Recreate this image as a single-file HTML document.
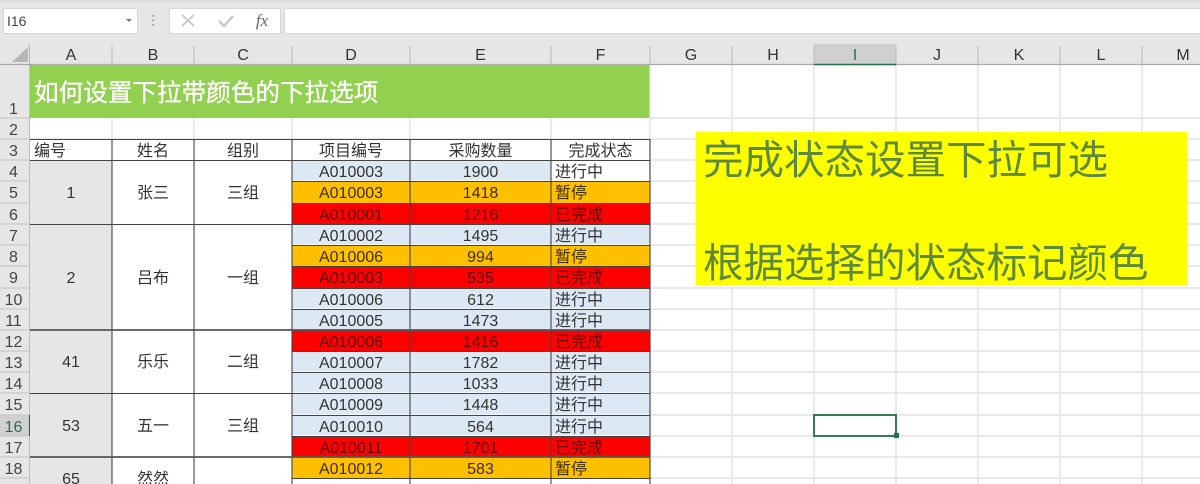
<!DOCTYPE html>
<html lang="zh">
<head>
<meta charset="utf-8">
<style>
html,body{margin:0;padding:0;width:1200px;height:484px;overflow:hidden;background:#fff}
body{position:relative;font-family:"Liberation Sans","Noto Sans CJK SC",sans-serif;font-size:16px;color:#333}
div{position:absolute;box-sizing:border-box}
.c{text-align:center;white-space:nowrap}
.ch{top:44px;height:20px;line-height:24px;color:#333}
.rh{left:0;width:27px;text-align:center;color:#444}
.d{left:292px;width:118px}
.e{left:410px;width:141px}
.f{left:551px;width:99px;padding-left:4px;text-align:left}
.d,.e,.f{white-space:nowrap;color:#333}
.d,.e{text-align:center}
.o{background:#ffc000;color:#3d2e00}
.x{background:#ff0000;color:#5a0000}
.b{background:#dce9f5;box-shadow:inset 0 -1px 0 #f2f7fb}
.m{text-align:center;white-space:nowrap;color:#333}
svg{position:absolute;left:0;top:0}
</style>
</head>
<body>
<!-- top chrome -->
<div style="left:0;top:0;width:1200px;height:65px;background:#e6e6e6"></div>
<div style="left:0;top:0;width:1200px;height:3px;background:#dedede"></div>
<div style="left:3px;top:8px;width:135px;height:26px;background:#fff;border:1px solid #d8d8d8"></div>
<div style="left:7px;top:10px;font-size:14px;line-height:22px;color:#444">I16</div>
<div style="left:126px;top:19px;width:0;height:0;border-left:3px solid transparent;border-right:3px solid transparent;border-top:3px solid #777"></div>
<div style="left:169px;top:8px;width:112px;height:26px;background:#fff;border:1px solid #d8d8d8"></div>
<div style="left:284px;top:8px;width:916px;height:26px;background:#fff;border:1px solid #d8d8d8;border-right:0"></div>
<div style="left:252px;top:9px;width:20px;height:24px;line-height:24px;text-align:center;font-family:'Liberation Serif',serif;font-style:italic;font-size:17px;color:#666">fx</div>

<!-- column headers -->
<div style="left:814px;top:44px;width:82px;height:20px;background:#d0d0d0"></div>
<div class="c ch" style="left:30px;width:82px">A</div>
<div class="c ch" style="left:112px;width:82px">B</div>
<div class="c ch" style="left:194px;width:98px">C</div>
<div class="c ch" style="left:292px;width:118px">D</div>
<div class="c ch" style="left:410px;width:141px">E</div>
<div class="c ch" style="left:551px;width:99px">F</div>
<div class="c ch" style="left:650px;width:82px">G</div>
<div class="c ch" style="left:732px;width:82px">H</div>
<div class="c ch" style="left:814px;width:82px;color:#2d6b55">I</div>
<div class="c ch" style="left:896px;width:82px">J</div>
<div class="c ch" style="left:978px;width:82px">K</div>
<div class="c ch" style="left:1060px;width:82px">L</div>
<div class="c ch" style="left:1142px;width:82px">M</div>

<!-- row header -->
<div style="left:0;top:65px;width:30px;height:419px;background:#e6e6e6"></div>
<div style="left:0;top:415px;width:29px;height:21px;background:#d0d0d0"></div>
<div class="rh" style="top:98px;height:20px;line-height:24px">1</div>
<div class="rh" style="top:118px;height:21px;line-height:25px">2</div>
<div class="rh" style="top:139px;height:21px;line-height:25px">3</div>
<div class="rh" style="top:160px;height:21px;line-height:25px">4</div>
<div class="rh" style="top:181px;height:22px;line-height:25px">5</div>
<div class="rh" style="top:203px;height:21px;line-height:25px">6</div>
<div class="rh" style="top:224px;height:21px;line-height:25px">7</div>
<div class="rh" style="top:245px;height:21px;line-height:25px">8</div>
<div class="rh" style="top:266px;height:22px;line-height:25px">9</div>
<div class="rh" style="top:288px;height:21px;line-height:25px">10</div>
<div class="rh" style="top:309px;height:21px;line-height:25px">11</div>
<div class="rh" style="top:330px;height:21px;line-height:25px">12</div>
<div class="rh" style="top:351px;height:21px;line-height:25px">13</div>
<div class="rh" style="top:372px;height:21px;line-height:25px">14</div>
<div class="rh" style="top:393px;height:22px;line-height:25px">15</div>
<div class="rh" style="top:415px;height:21px;line-height:25px;color:#2d6b55">16</div>
<div class="rh" style="top:436px;height:21px;line-height:25px">17</div>
<div class="rh" style="top:457px;height:21px;line-height:25px">18</div>

<!-- title -->
<div style="left:30px;top:65px;width:620px;height:53px;background:#92d050"></div>
<div style="left:34px;top:77px;font-size:24.6px;line-height:34px;color:#fff;white-space:nowrap;-webkit-text-stroke:.3px #fff">如何设置下拉带颜色的下拉选项</div>

<!-- gridlines drawn below fills -->
<svg width="1200" height="484" style="z-index:0">
<g stroke="#e2e2e2" stroke-width="1.4" fill="none">
<path d="M650 118H1200M30 139H1200M650 160H1200M650 181H1200M650 203H1200M650 224H1200M650 245H1200M650 266H1200M650 288H1200M650 309H1200M650 330H1200M650 351H1200M650 372H1200M650 393H1200M650 415H1200M650 436H1200M650 457H1200M650 478H1200"/>
<path d="M112 118V139M194 118V139M292 118V139M410 118V139M551 118V139M650 65V484M732 65V484M814 65V484M896 65V484M978 65V484M1060 65V484M1142 65V484"/>
</g>
<!-- row header separators -->
<path d="M0 118H30M0 139H30M0 160H30M0 181H30M0 203H30M0 224H30M0 245H30M0 266H30M0 288H30M0 309H30M0 330H30M0 351H30M0 372H30M0 393H30M0 415H30M0 436H30M0 457H30M0 478H30" stroke="#c9c9c9" stroke-width="1.2"/>
<path d="M29.5 65V484" stroke="#bdbdbd"/>
<path d="M112 46V64M194 46V64M292 46V64M410 46V64M551 46V64M650 46V64M732 46V64M814 46V64M896 46V64M978 46V64M1060 46V64M1142 46V64M29.5 44V64" stroke="#b8b8b8"/>
<path d="M0 64.5H1200" stroke="#a9a9a9" stroke-width="1.2"/>
<path d="M814 64.5H896" stroke="#217346" stroke-width="1.6"/>
<path d="M29.5 415V436" stroke="#217346" stroke-width="1.2"/>
<path d="M12 62L28 47V62Z" fill="#b6b6b6"/>
<!-- formula icons -->
<path d="M182 15L194 26M194 15L182 26" stroke="#c2c2c2" stroke-width="1.6" fill="none"/>
<path d="M219 21L224 26L233 16" stroke="#c8c8c8" stroke-width="2.4" fill="none"/>
<path d="M153 15v1.6M153 19.5v1.6M153 24v1.6" stroke="#a8a8a8" stroke-width="2.4" fill="none"/>
</svg>

<!-- merged A fill -->
<div style="left:30px;top:160px;width:82px;height:64px;background:#e6e6e6"></div>
<div style="left:30px;top:224px;width:82px;height:106px;background:#e6e6e6"></div>
<div style="left:30px;top:330px;width:82px;height:63px;background:#e6e6e6"></div>
<div style="left:30px;top:393px;width:82px;height:64px;background:#e6e6e6"></div>
<div style="left:30px;top:457px;width:82px;height:27px;background:#e6e6e6"></div>

<!-- header row 3 -->
<div style="left:34px;top:139px;height:21px;line-height:25px;white-space:nowrap">编号</div>
<div class="m" style="left:112px;top:139px;width:82px;height:21px;line-height:25px">姓名</div>
<div class="m" style="left:194px;top:139px;width:98px;height:21px;line-height:25px">组别</div>
<div class="m" style="left:292px;top:139px;width:118px;height:21px;line-height:25px">项目编号</div>
<div class="m" style="left:410px;top:139px;width:141px;height:21px;line-height:25px">采购数量</div>
<div class="m" style="left:551px;top:139px;width:99px;height:21px;line-height:25px">完成状态</div>

<!-- merged -->
<div class="m" style="left:30px;top:160px;width:82px;height:64px;line-height:68px">1</div>
<div class="m" style="left:112px;top:160px;width:82px;height:64px;line-height:68px">张三</div>
<div class="m" style="left:194px;top:160px;width:98px;height:64px;line-height:68px">三组</div>
<div class="m" style="left:30px;top:224px;width:82px;height:106px;line-height:110px">2</div>
<div class="m" style="left:112px;top:224px;width:82px;height:106px;line-height:110px">吕布</div>
<div class="m" style="left:194px;top:224px;width:98px;height:106px;line-height:110px">一组</div>
<div class="m" style="left:30px;top:330px;width:82px;height:63px;line-height:66px">41</div>
<div class="m" style="left:112px;top:330px;width:82px;height:63px;line-height:66px">乐乐</div>
<div class="m" style="left:194px;top:330px;width:98px;height:63px;line-height:66px">二组</div>
<div class="m" style="left:30px;top:393px;width:82px;height:64px;line-height:67px">53</div>
<div class="m" style="left:112px;top:393px;width:82px;height:64px;line-height:67px">五一</div>
<div class="m" style="left:194px;top:393px;width:98px;height:64px;line-height:67px">三组</div>
<div class="m" style="left:30px;top:468px;width:82px;height:24px;line-height:24px">65</div>
<div class="m" style="left:112px;top:468px;width:82px;height:24px;line-height:24px">然然</div>

<!-- data rows -->
<div class="d b" style="top:160px;height:21px;line-height:25px">A010003</div><div class="e b" style="top:160px;height:21px;line-height:25px">1900</div><div class="f" style="top:160px;height:21px;line-height:25px">进行中</div>
<div class="d o" style="top:181px;height:22px;line-height:25px">A010003</div><div class="e o" style="top:181px;height:22px;line-height:25px">1418</div><div class="f o" style="top:181px;height:22px;line-height:25px">暂停</div>
<div class="d x" style="top:203px;height:21px;line-height:25px">A010001</div><div class="e x" style="top:203px;height:21px;line-height:25px">1216</div><div class="f x" style="top:203px;height:21px;line-height:25px">已完成</div>
<div class="d b" style="top:224px;height:21px;line-height:25px">A010002</div><div class="e b" style="top:224px;height:21px;line-height:25px">1495</div><div class="f b" style="top:224px;height:21px;line-height:25px">进行中</div>
<div class="d o" style="top:245px;height:21px;line-height:25px">A010006</div><div class="e o" style="top:245px;height:21px;line-height:25px">994</div><div class="f o" style="top:245px;height:21px;line-height:25px">暂停</div>
<div class="d x" style="top:266px;height:22px;line-height:25px">A010003</div><div class="e x" style="top:266px;height:22px;line-height:25px">535</div><div class="f x" style="top:266px;height:22px;line-height:25px">已完成</div>
<div class="d b" style="top:288px;height:21px;line-height:25px">A010006</div><div class="e b" style="top:288px;height:21px;line-height:25px">612</div><div class="f b" style="top:288px;height:21px;line-height:25px">进行中</div>
<div class="d b" style="top:309px;height:21px;line-height:25px">A010005</div><div class="e b" style="top:309px;height:21px;line-height:25px">1473</div><div class="f b" style="top:309px;height:21px;line-height:25px">进行中</div>
<div class="d x" style="top:330px;height:21px;line-height:25px">A010006</div><div class="e x" style="top:330px;height:21px;line-height:25px">1416</div><div class="f x" style="top:330px;height:21px;line-height:25px">已完成</div>
<div class="d b" style="top:351px;height:21px;line-height:25px">A010007</div><div class="e b" style="top:351px;height:21px;line-height:25px">1782</div><div class="f b" style="top:351px;height:21px;line-height:25px">进行中</div>
<div class="d b" style="top:372px;height:21px;line-height:25px">A010008</div><div class="e b" style="top:372px;height:21px;line-height:25px">1033</div><div class="f b" style="top:372px;height:21px;line-height:25px">进行中</div>
<div class="d b" style="top:393px;height:22px;line-height:25px">A010009</div><div class="e b" style="top:393px;height:22px;line-height:25px">1448</div><div class="f b" style="top:393px;height:22px;line-height:25px">进行中</div>
<div class="d b" style="top:415px;height:21px;line-height:25px">A010010</div><div class="e b" style="top:415px;height:21px;line-height:25px">564</div><div class="f b" style="top:415px;height:21px;line-height:25px">进行中</div>
<div class="d x" style="top:436px;height:21px;line-height:25px">A010011</div><div class="e x" style="top:436px;height:21px;line-height:25px">1701</div><div class="f x" style="top:436px;height:21px;line-height:25px">已完成</div>
<div class="d o" style="top:457px;height:21px;line-height:25px">A010012</div><div class="e o" style="top:457px;height:21px;line-height:25px">583</div><div class="f o" style="top:457px;height:21px;line-height:25px">暂停</div>

<!-- table borders -->
<svg width="1200" height="484" style="z-index:5">
<g stroke="#444" stroke-width="1.1" fill="none">
<path d="M30 139.5H650M30 160.5H650M292 181.5H650M292 203.5H650M30 224.5H650M292 245.5H650M292 266.5H650M292 288.5H650M292 309.5H650M292 351.5H650M292 372.5H650M30 393.5H650M292 415.5H650M292 436.5H650M292 478.5H650"/>
<path d="M112 139V484M194 139V484M292 139V484M410 139V484M551 139V484M650 139V484"/>
</g>
<path d="M30 330H650M30 457H650" stroke="#555" stroke-width="1.8" fill="none"/>
</svg>

<!-- yellow note -->
<div style="left:696px;top:132px;width:491px;height:153px;background:#ffff00;z-index:6"></div>
<div style="left:703px;top:136px;font-size:40.5px;line-height:48px;color:#5c8a3a;white-space:nowrap;z-index:7">完成状态设置下拉可选</div>
<div style="left:703px;top:239px;font-size:40.5px;line-height:48px;color:#5c8a3a;white-space:nowrap;z-index:7">根据选择的状态标记颜色</div>

<!-- selection -->
<div style="left:813px;top:414px;width:84px;height:23px;border:2px solid #2f7d54;z-index:8"></div>
<div style="left:894px;top:433px;width:5px;height:5px;background:#217346;border:0;z-index:9"></div>
</body>
</html>
